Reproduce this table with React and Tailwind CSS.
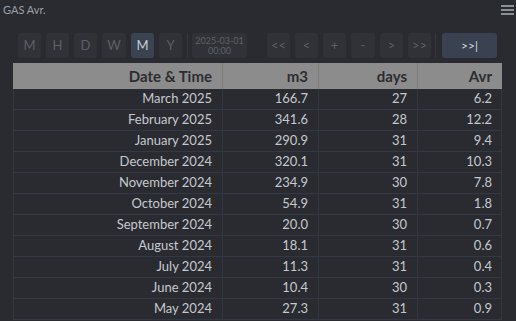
import React from "react";

const rows = [
  ["March 2025", "166.7", "27", "6.2"],
  ["February 2025", "341.6", "28", "12.2"],
  ["January 2025", "290.9", "31", "9.4"],
  ["December 2024", "320.1", "31", "10.3"],
  ["November 2024", "234.9", "30", "7.8"],
  ["October 2024", "54.9", "31", "1.8"],
  ["September 2024", "20.0", "30", "0.7"],
  ["August 2024", "18.1", "31", "0.6"],
  ["July 2024", "11.3", "31", "0.4"],
  ["June 2024", "10.4", "30", "0.3"],
  ["May 2024", "27.3", "31", "0.9"],
];

function Btn({ children, active, w = "w-[23px]" }) {
  return (
    <div
      className={`${w} h-[25px] rounded-[3px] flex items-center justify-center text-[13px] ${
        active ? "bg-[#3b4250] text-[#c9cdd4]" : "bg-[#303238] text-[#5b5f67]"
      }`}
    >
      {children}
    </div>
  );
}

export default function App() {
  return (
    <div
      className="w-[516px] h-[321px] overflow-hidden bg-[#2a2b30] relative"
      style={{ fontFamily: "Lato, 'Noto Sans', sans-serif" }}
    >
      <div className="h-[20px] flex items-center justify-between pl-[3px] pr-[2px]">
        <span className="text-[11px] text-[#9aa0a7]">GAS Avr.</span>
        <svg width="13" height="12" viewBox="0 0 13 12">
          <rect x="0" y="1" width="13" height="2" fill="#8a8e95" />
          <rect x="0" y="5" width="13" height="2" fill="#8a8e95" />
          <rect x="0" y="9" width="13" height="2" fill="#8a8e95" />
        </svg>
      </div>
      <div className="mt-[13px] flex items-center pl-[18px] h-[25px]">
        <div className="flex gap-[5px]">
          <Btn>M</Btn>
          <Btn>H</Btn>
          <Btn>D</Btn>
          <Btn w="w-[24px]">W</Btn>
          <Btn active>M</Btn>
          <Btn>Y</Btn>
        </div>
        <div className="w-px h-[25px] bg-[#35373d] ml-[5px] mr-[4px]" />
        <div className="w-[55px] h-[25px] rounded-[3px] bg-[#303238] flex flex-col items-center justify-center text-[9px] leading-[10px] text-[#5d6168] whitespace-nowrap">
          <span>2025-03-01</span>
          <span>00:00</span>
        </div>
        <div className="flex gap-[5px] ml-[20px]">
          <Btn>&lt;&lt;</Btn>
          <Btn>&lt;</Btn>
          <Btn>+</Btn>
          <Btn w="w-[24px]">-</Btn>
          <Btn>&gt;</Btn>
          <Btn>&gt;&gt;</Btn>
        </div>
        <div className="w-px h-[25px] bg-[#35373d] ml-[4px] mr-[6px]" />
        <div className="w-[55px] h-[25px] rounded-[3px] bg-[#3a4252] flex items-center justify-center text-[12px] text-[#d4d8de]">
          &gt;&gt;|
        </div>
      </div>
      <div className="mt-[5px] ml-[13px] w-[489px]">
        <div className="flex h-[26px] bg-[#8c8c8c] text-[15px] font-bold text-[#2c2d32]">
          <div className="w-[210px] flex items-center justify-end pr-[10px] border-r border-[#7e7e7e]">Date &amp; Time</div>
          <div className="w-[96px] flex items-center justify-end pr-[10px] border-r border-[#7e7e7e]">m3</div>
          <div className="w-[99px] flex items-center justify-end pr-[10px] border-r border-[#7e7e7e]">days</div>
          <div className="w-[84px] flex items-center justify-end pr-[10px]">Avr</div>
        </div>
        <div className="border-l border-r border-[#33373f]">
          {rows.map((r, i) => (
            <div key={i} className="flex h-[21px] border-b border-[#323846] text-[13px] text-[#c5c9cf]">
              <div className="w-[209px] flex items-center justify-end pr-[10px] border-r border-[#33373f]">{r[0]}</div>
              <div className="w-[96px] flex items-center justify-end pr-[10px] border-r border-[#33373f]">{r[1]}</div>
              <div className="w-[99px] flex items-center justify-end pr-[10px] border-r border-[#33373f]">{r[2]}</div>
              <div className="w-[83px] flex items-center justify-end pr-[9px]">{r[3]}</div>
            </div>
          ))}
        </div>
      </div>
    </div>
  );
}
